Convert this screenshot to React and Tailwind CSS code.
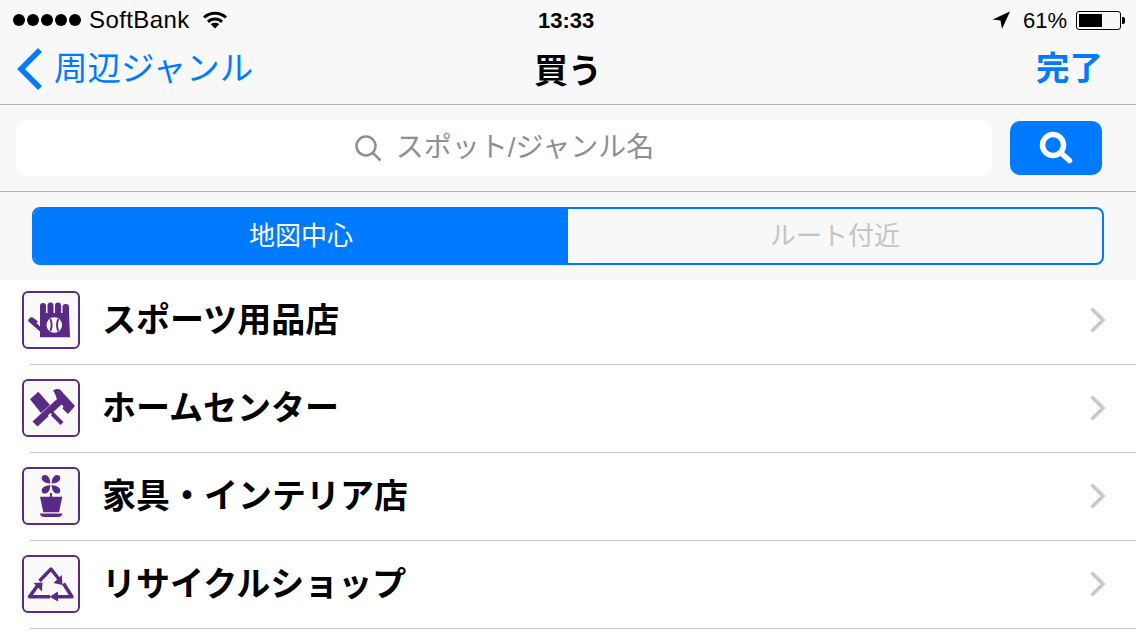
import React from 'react'

function Wifi() {
  return (
    <svg width="24" height="18" viewBox="0 0 24 18" fill="none" stroke="#000" strokeWidth="3">
      <path d="M1 6.500C7 .8 17 .8 23 6.500" />
      <path d="M5 10.800C9 7 15 7 19 10.800" />
      <path d="M12 17.500L7.800 13.200C10 11.400 14 11.400 16.200 13.200Z" fill="#000" stroke="none" />
    </svg>
  )
}

function IconBox({ children }) {
  return (
    <div className="w-[58px] h-[58px] shrink-0 rounded-[6px] border-2 border-[#5a2a87] bg-[#fafafa] flex items-center justify-center">
      <svg width="54" height="54" viewBox="0 0 54 54" fill="#5a2a87">{children}</svg>
    </div>
  )
}

function Glove() {
  return (
    <>
      <rect x="16" y="10" width="6" height="20" rx="3" />
      <rect x="23.500" y="9.500" width="6" height="20" rx="3" />
      <rect x="31" y="9.500" width="6" height="20" rx="3" />
      <rect x="38.500" y="11" width="6.500" height="20" rx="3" />
      <path d="M16 20H45L46 44.300H16V38.500L4.800 28.800C3.800 28 4 26.800 4.800 26L6.500 24.500C7.200 24 8 24 8.800 24.500L16 30Z" />
      <path d="M16 26.500V33.500L12.500 30Z" fill="#fafafa" />
      <circle cx="30.300" cy="32" r="7.800" fill="#fafafa" />
      <path d="M27 25.500C29 29 29 35 27 38.500L25.500 37.500C27 34.500 27 29.500 25.500 26.500Z" />
      <path d="M33.600 25.500C31.600 29 31.600 35 33.600 38.500L35.100 37.500C33.600 34.500 33.600 29.500 35.100 26.500Z" />
    </>
  )
}

function Tools() {
  return (
    <>
      <path d="M6 18.300L14.300 10.700L26 24L17 32Z" />
      <path d="M25 32.500L28 29.500L39.500 41L36.500 44Z" />
      <path d="M38.500 13L43.500 18L13.500 45.500L8.500 40.500Z" />
      <path d="M29 9.500C31 7.800 34 7.500 36 8.500L51 25L44 33L38.500 27.500L39.500 25.500L33 18.500C32 15 31 12 29 9.500Z" />
      <path d="M23.800 34.500L26.500 32L28 33.500L25.300 36Z" fill="#fafafa" />
    </>
  )
}

function Petal({ rotate }) {
  return (
    <path
      transform={rotate}
      d="M26.300 14.600C24 14.200 18 13.500 17.700 9.200C17.500 6.800 19 6 21 6C24.500 6 26.600 11 26.300 14.600Z"
    />
  )
}

function Plant() {
  return (
    <>
      <Petal />
      <Petal rotate="matrix(-1 0 0 1 54 0)" />
      <Petal rotate="matrix(1 0 0 -1 0 30.600)" />
      <Petal rotate="matrix(-1 0 0 -1 54 30.600)" />
      <path d="M26 24H28V28H26Z" />
      <path d="M16 27.700H38.300L35 43.300H19.300Z" />
      <path d="M16 44.500H38.300C38.300 46.800 36.500 48 34.500 48H20C18 48 16 46.800 16 44.500Z" />
    </>
  )
}

function Recycle() {
  return (
    <>
      <g fill="none" stroke="#5a2a87" strokeWidth="3.500" strokeLinejoin="round">
        <path d="M15.500 24L27 12L36 23.500" />
        <path d="M26 39.700H5.500L14 28" />
        <path d="M39.500 26.500L48 39.700H31" />
      </g>
      <path d="M37.800 18L38.500 28L29.500 26Z" />
      <path d="M9.500 26L18.500 25.500L18 34.500Z" />
      <path d="M25.500 39.700L34 34.500V44.500Z" />
    </>
  )
}

function Row({ icon, label }) {
  return (
    <div className="relative flex items-center h-[88px] pb-[2px] pl-[22px] pr-[29px]">
      {icon}
      <div className="ml-[22px] flex-1 text-[34px] font-bold leading-none text-black">{label}</div>
      <svg width="18" height="28" viewBox="0 0 18 28" fill="none" stroke="#c7c7cc" strokeWidth="3.500">
        <path d="M2.500 2.500L14 14L2.500 25.500" />
      </svg>
      <div className="absolute left-[30px] right-0 bottom-0 h-px bg-[#c8c7cc]" />
    </div>
  )
}

export default function App() {
  return (
    <div className="w-[1136px] h-[640px] overflow-hidden bg-white font-['Liberation_Sans','Noto_Sans_CJK_JP',sans-serif]">
      <div className="h-[105px] bg-[#f8f8f8] border-b border-[#b2b2b2]">
        <div className="h-[40px] relative flex items-center justify-between pl-[13px] pr-[11px] text-[22px] text-black">
          <div className="flex items-center">
            <div className="flex gap-[2px]">
              <span className="w-[12px] h-[12px] rounded-full bg-black" />
              <span className="w-[12px] h-[12px] rounded-full bg-black" />
              <span className="w-[12px] h-[12px] rounded-full bg-black" />
              <span className="w-[12px] h-[12px] rounded-full bg-black" />
              <span className="w-[12px] h-[12px] rounded-full bg-black" />
            </div>
            <span className="ml-[8px] text-[24px] tracking-[0.4px]">SoftBank</span>
            <span className="ml-[13px]"><Wifi /></span>
          </div>
          <div className="absolute left-[538px] top-[8px] text-[22px] font-bold leading-[26px]">13:33</div>
          <div className="flex items-center">
            <svg width="18" height="18" viewBox="0 0 18 18" fill="#000"><path d="M18 .5L.5 8.500L8.500 9.500L10 18Z" /></svg>
            <span className="ml-[13px]">61%</span>
            <div className="ml-[9px] w-[45px] h-[19px] rounded-[3px] border border-black p-[2px]">
              <div className="w-[23px] h-full bg-black" />
            </div>
            <div className="ml-[1px] w-[3px] h-[7px] bg-black rounded-r-[2px]" />
          </div>
        </div>
        <div className="h-[64px] relative flex items-center justify-between pl-[16px] pr-[33px] pb-[7px]">
          <div className="flex items-center text-[#007aff]">
            <svg width="28" height="44" viewBox="0 0 28 44" fill="none" stroke="#007aff" strokeWidth="5.500">
              <path d="M24 3L5 22L24 41" />
            </svg>
            <span className="ml-[10px] text-[33.500px] leading-none">周辺ジャンル</span>
          </div>
          <div className="absolute left-[534px] top-[12px] text-[34px] font-bold leading-[38px] text-black">買う</div>
          <div className="text-[33.500px] font-bold leading-none text-[#007aff]">完了</div>
        </div>
      </div>

      <div className="h-[87px] bg-[#f8f8f8] border-b border-[#b2b2b2] flex items-center pl-[16px] pr-[34px]">
        <div className="w-[976px] h-[56px] rounded-[10px] bg-white flex items-center justify-center text-[#8e8e93] text-[28px]">
          <svg width="28" height="28" viewBox="0 0 28 28" fill="none" stroke="#8e8e93" strokeWidth="2.500">
            <circle cx="12" cy="12" r="9.500" />
            <path d="M19 19L26.500 26.500" />
          </svg>
          <span className="ml-[14px] leading-none">スポット/ジャンル名</span>
        </div>
        <div className="ml-[18px] w-[92px] h-[54px] rounded-[10px] bg-[#007aff] flex items-center justify-center">
          <svg width="34" height="34" viewBox="0 0 34 34" fill="none" stroke="#fff" strokeLinecap="round">
            <circle cx="14" cy="14" r="10.500" strokeWidth="5.500" />
            <path d="M22 22L30.500 29.500" strokeWidth="5.500" />
          </svg>
        </div>
      </div>

      <div className="h-[88px] bg-[#f8f8f8] pt-[15px] px-[32px]">
        <div className="h-[58px] w-[1072px] rounded-[8px] border-2 border-[#007aff] overflow-hidden flex text-[26px]">
          <div className="w-[534px] bg-[#007aff] text-white flex items-center justify-center">地図中心</div>
          <div className="flex-1 text-[#c4c4c6] flex items-center justify-center">ルート付近</div>
        </div>
      </div>

      <div className="-mt-[4px] pt-[1px]">
        <Row icon={<IconBox><Glove /></IconBox>} label="スポーツ用品店" />
        <Row icon={<IconBox><Tools /></IconBox>} label="ホームセンター" />
        <Row icon={<IconBox><Plant /></IconBox>} label="家具・インテリア店" />
        <Row icon={<IconBox><Recycle /></IconBox>} label="リサイクルショップ" />
      </div>
    </div>
  )
}
